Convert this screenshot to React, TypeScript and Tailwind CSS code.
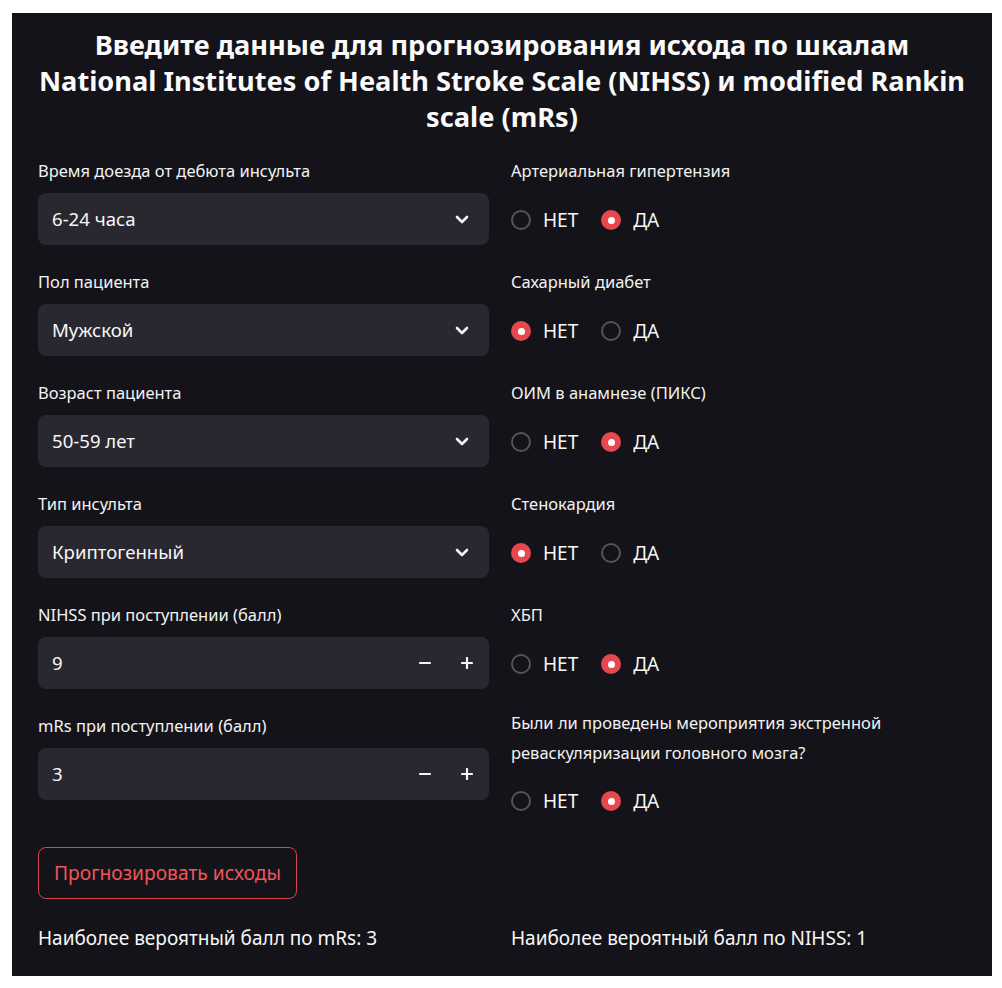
import React from 'react';

const font = { fontFamily: '"Noto Sans", "Open Sans", sans-serif' };

function Chevron() {
  return (
    <svg width="14" height="9" viewBox="0 0 14 9" fill="none">
      <path d="M2 2l5 5 5-5" stroke="#f5f5f5" strokeWidth="2.6" strokeLinecap="round" strokeLinejoin="round" />
    </svg>
  );
}

function SelectField({ label, value }: { label: string; value: string }) {
  return (
    <div className="flex flex-col">
      <div className="h-6 leading-6 text-[16.5px] text-[#f2f2f2]">{label}</div>
      <div className="mt-[10px] h-[52px] rounded-lg bg-[#292831] flex items-center justify-between pl-[14px] pr-[20px]">
        <span className="text-[18.6px] text-[#f7f7f7]">{value}</span>
        <Chevron />
      </div>
    </div>
  );
}

function NumberField({ label, value }: { label: string; value: string }) {
  return (
    <div className="flex flex-col">
      <div className="h-6 leading-6 text-[16.5px] text-[#f2f2f2]">{label}</div>
      <div className="mt-[10px] h-[52px] rounded-lg bg-[#292831] flex items-center pl-[14px] pr-[16px]">
        <span className="flex-1 text-[18.6px] text-[#f7f7f7]">{value}</span>
        <svg width="12" height="12" viewBox="0 0 12 12" className="mr-[30px]">
          <path d="M1 6h10" stroke="#f5f5f5" strokeWidth="2.2" strokeLinecap="round" />
        </svg>
        <svg width="12" height="12" viewBox="0 0 12 12">
          <path d="M1 6h10M6 1v10" stroke="#f5f5f5" strokeWidth="2.2" strokeLinecap="round" />
        </svg>
      </div>
    </div>
  );
}

function Radio({ checked, text }: { checked: boolean; text: string }) {
  return (
    <div className="flex items-center gap-3">
      {checked ? (
        <span className="w-5 h-5 rounded-full bg-[#e5484e] flex items-center justify-center">
          <span className="w-[7px] h-[7px] rounded-full bg-white" />
        </span>
      ) : (
        <span className="w-5 h-5 rounded-full border-2 border-[#55545c]" />
      )}
      <span className="text-[19px] text-[#f7f7f7]">{text}</span>
    </div>
  );
}

function RadioField({ label, yes, twoLine }: { label: React.ReactNode; yes: boolean; twoLine?: boolean }) {
  return (
    <div className="flex flex-col">
      <div className={twoLine ? '-mt-[6px] leading-[30px] text-[16.5px] text-[#f2f2f2]' : 'h-6 leading-6 text-[16.5px] text-[#f2f2f2]'}>
        {label}
      </div>
      <div className={twoLine ? 'mt-[21px] h-6 flex items-center gap-[23px]' : 'mt-[25px] h-6 flex items-center gap-[23px]'}>
        <Radio checked={!yes} text="НЕТ" />
        <Radio checked={yes} text="ДА" />
      </div>
    </div>
  );
}

export default function App() {
  return (
    <div className="min-h-screen bg-white pt-[13px] px-[12px]" style={font}>
      <div className="w-[980px] bg-[#141319] px-[26px] pt-[14px] pb-[24px] flex flex-col">
        <h1 className="text-center font-bold text-[27.2px] leading-[36px] text-[#fafafa] whitespace-nowrap">
          <span className="block">Введите данные для прогнозирования исхода по шкалам</span>
          <span className="block">National Institutes of Health Stroke Scale (NIHSS) и modified Rankin</span>
          <span className="block">scale (mRs)</span>
        </h1>

        <div className="mt-6 grid grid-cols-[451px_1fr] gap-x-[22px] gap-y-[25px]">
          <SelectField label="Время доезда от дебюта инсульта" value="6-24 часа" />
          <RadioField label="Артериальная гипертензия" yes={true} />
          <SelectField label="Пол пациента" value="Мужской" />
          <RadioField label="Сахарный диабет" yes={false} />
          <SelectField label="Возраст пациента" value="50-59 лет" />
          <RadioField label="ОИМ в анамнезе (ПИКС)" yes={true} />
          <SelectField label="Тип инсульта" value="Криптогенный" />
          <RadioField label="Стенокардия" yes={false} />
          <NumberField label="NIHSS при поступлении (балл)" value="9" />
          <RadioField label="ХБП" yes={true} />
          <NumberField label="mRs при поступлении (балл)" value="3" />
          <RadioField
            twoLine
            yes={true}
            label={
              <>
                Были ли проведены мероприятия экстренной
                <br />
                реваскуляризации головного мозга?
              </>
            }
          />
        </div>

        <div className="mt-[34px]">
          <button className="h-[52px] w-[259px] rounded-lg border border-[#d4464c] text-[19.2px] text-[#f0555b]">
            Прогнозировать исходы
          </button>
        </div>

        <div className="mt-[25px] grid grid-cols-[451px_1fr] gap-x-[22px]">
          <div className="leading-7 text-[19px] text-[#f7f7f7]">Наиболее вероятный балл по mRs: 3</div>
          <div className="leading-7 text-[19px] text-[#f7f7f7]">Наиболее вероятный балл по NIHSS: 1</div>
        </div>
      </div>
    </div>
  );
}
